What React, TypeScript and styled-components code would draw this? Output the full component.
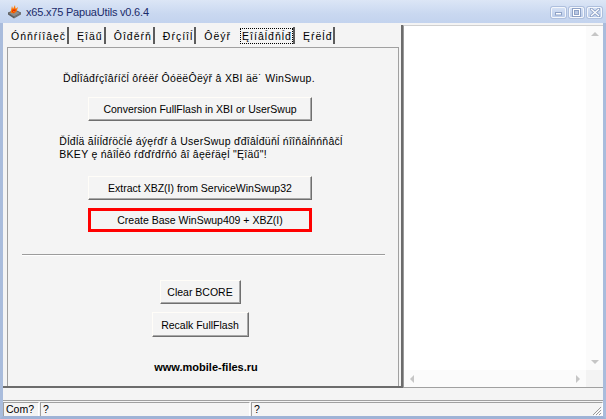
import React from 'react';
import styled, { createGlobalStyle } from 'styled-components';

const Global = createGlobalStyle`
  html, body { margin: 0; padding: 0; background: #f4f4f4; overflow: hidden; }
  body { font-family: "Liberation Sans", Arial, sans-serif; }
`;

const Window = styled.div`
  width: 606px;
  height: 419px;
  display: flex;
  flex-direction: column;
  background: #f4f4f4;
`;

const TitleBar = styled.div`
  height: 23px;
  flex: none;
  display: flex;
  align-items: center;
  padding: 0 4px 0 6px;
  box-sizing: border-box;
  background: linear-gradient(#dce6f6, #c9d8f0 60%, #c3d3ee);
`;

const TitleText = styled.span`
  margin-left: 4px;
  font-size: 11px;
  letter-spacing: -0.2px;
  color: #1b2b6a;
  flex: 1;
`;

const CapButtons = styled.div`
  display: flex;
  gap: 3px;
  margin-top: 1px;
`;

const CapButton = styled.div`
  width: 15px;
  height: 11px;
  box-sizing: border-box;
  border: 1px solid #f4f7fc;
  border-radius: 2px;
  background: linear-gradient(#d4e0f4, #bccdea);
  box-shadow: 0 0 0 1px #aebfdd;
  display: flex;
  align-items: center;
  justify-content: center;
`;

const Frame = styled.div`
  flex: 1;
  display: flex;
  flex-direction: column;
  border-left: 3px solid #a9bcdc;
  border-right: 3px solid #a9bcdc;
  border-bottom: 3px solid #9fb3d6;
`;

const Body = styled.div`
  height: 365px;
  flex: none;
  display: flex;
  padding-top: 2px;
  box-sizing: border-box;
`;

const LeftArea = styled.div`
  width: 400px;
  flex: none;
  display: flex;
  flex-direction: column;
  box-sizing: border-box;
  padding-left: 4px;
  border-right: 2px solid #6c6c6c;
  border-bottom: 2px solid #6c6c6c;
`;

const TabStrip = styled.div`
  height: 21px;
  display: flex;
  align-items: flex-start;
  flex: none;
`;

const Tab = styled.div<{ $selected?: boolean; $sep?: boolean }>`
  height: 17px;
  margin-top: 2px;
  margin-right: 4px;
  padding: 0 1px 0 3px;
  display: flex;
  align-items: center;
  font-size: 10.5px;
  letter-spacing: 1px;
  color: #000;
  border-right: 2px solid ${p => (p.$sep ? '#5c5c5c' : 'transparent')};
  white-space: nowrap;
  & > span {
    padding: 1px 0 1px 1px;
    outline: ${p => (p.$selected ? '1px dotted #000' : 'none')};
  }
`;

const TabPanel = styled.div`
  flex: 1;
  margin-top: 1px;
  margin-right: 2px;
  border-left: 1px solid #a0a0a0;
  border-top: 1px solid #a0a0a0;
  border-right: 1px solid #a0a0a0;
  display: flex;
  flex-direction: column;
  align-items: center;
  padding-right: 6px;
`;

const Label = styled.div<{ $top: number; $shift?: number; $ls?: number }>`
  margin-top: ${p => p.$top}px;
  font-size: 10.5px;
  line-height: 13px;
  letter-spacing: ${p => p.$ls ?? 0}px;
  color: #000;
  white-space: nowrap;
  transform: translateX(${p => p.$shift ?? 0}px);
  text-align: left;
`;

const Site = styled(Label)`
  font-weight: bold;
  font-size: 11px;
`;

const Button = styled.div<{ $top: number; $w: number; $h?: number; $red?: boolean }>`
  margin-top: ${p => p.$top}px;
  width: ${p => p.$w}px;
  height: ${p => p.$h ?? 24}px;
  box-sizing: border-box;
  display: flex;
  align-items: center;
  justify-content: center;
  font-size: 10.5px;
  color: #000;
  background: #f4f4f4;
  white-space: nowrap;
  ${p =>
    p.$red
      ? `border: 3px solid #ff0000;`
      : `border-top: 1px solid #fffdf8;
         border-left: 1px solid #fffdf8;
         border-right: 1px solid #6f6f6f;
         border-bottom: 1px solid #6f6f6f;
         box-shadow: inset -1px -1px 0 #a8a8a8;`}
`;

const Separator = styled.div<{ $top: number }>`
  margin-top: ${p => p.$top}px;
  width: 363px;
  height: 0;
  border-top: 1px solid #9c9c9c;
  border-bottom: 1px solid #ffffff;
  transform: translateX(3px);
`;

const Memo = styled.div`
  flex: 1;
  display: flex;
  flex-direction: column;
  background: #fff;
  border-left: 1px solid #9a9a9a;
  border-top: 1px solid #d0d0d0;
  border-bottom: 1px solid #a0a0a0;
`;

const MemoMain = styled.div`
  flex: 1;
  display: flex;
`;

const MemoText = styled.div`
  flex: 1;
`;

const VScroll = styled.div`
  width: 17px;
  display: flex;
  flex-direction: column;
  justify-content: space-between;
  align-items: center;
  padding: 6px 0 6px;
  background: #fbfbfb;
`;

const HScroll = styled.div`
  height: 17px;
  display: flex;
`;

const HTrack = styled.div`
  flex: 1;
  display: flex;
  justify-content: space-between;
  align-items: center;
  padding: 0 6px;
  background: #fbfbfb;
`;

const Corner = styled.div`
  width: 17px;
  background: #f3f3f3;
`;

const Arrow = styled.div<{ $dir: 'up' | 'down' | 'left' | 'right' }>`
  width: 0;
  height: 0;
  ${p =>
    p.$dir === 'up'
      ? 'border-left: 4px solid transparent; border-right: 4px solid transparent; border-bottom: 4px solid #c6c6c6;'
      : p.$dir === 'down'
      ? 'border-left: 4px solid transparent; border-right: 4px solid transparent; border-top: 4px solid #c6c6c6;'
      : p.$dir === 'left'
      ? 'border-top: 4px solid transparent; border-bottom: 4px solid transparent; border-right: 4px solid #c6c6c6;'
      : 'border-top: 4px solid transparent; border-bottom: 4px solid transparent; border-left: 4px solid #c6c6c6;'}
`;

const StatusGap = styled.div`
  height: 12px;
  flex: none;
  border-bottom: 1px solid #a0a0a0;
`;

const StatusBar = styled.div`
  flex: 1;
  display: flex;
  gap: 1px;
  padding-top: 1px;
`;

const StatusPanel = styled.div<{ $w?: number }>`
  ${p => (p.$w ? `width: ${p.$w}px; flex: none;` : 'flex: 1;')}
  box-sizing: border-box;
  border-left: 1px solid #a0a0a0;
  border-top: 1px solid #a0a0a0;
  border-right: 1px solid #ffffff;
  padding-left: 2px;
  font-size: 10.5px;
  line-height: 13px;
  color: #000;
  display: flex;
  justify-content: space-between;
  align-items: flex-end;
`;

const AppIcon = () => (
  <svg width="16" height="15" viewBox="0 0 16 15">
    <path d="M2 9 L9 6 L15 9 L8 13 Z" fill="#8c8c8c" stroke="#505050" strokeWidth="0.8" />
    <path d="M2 9 L2 10.5 L8 14.5 L8 13 Z" fill="#5a5a5a" />
    <path d="M8 13 L8 14.5 L15 10.5 L15 9 Z" fill="#707070" />
    <path d="M4.5 8.5 L6 2 L7 5 L9 1 L9.5 5 L12 3 L10.5 7.5 L8 9.5 Z" fill="#ff7a00" />
    <path d="M6 8 L7 4.5 L8 6.5 L9.3 4 L9.5 7 L8 8.8 Z" fill="#e52000" />
    <path d="M7 8 L8 6.8 L8.8 7.6 Z" fill="#ffe040" />
  </svg>
);

const MinGlyph = () => (
  <svg width="9" height="7" viewBox="0 0 9 7">
    <rect x="1.5" y="3.5" width="6" height="2.5" fill="#fff" stroke="#8fa2c6" strokeWidth="1" />
  </svg>
);
const MaxGlyph = () => (
  <svg width="9" height="9" viewBox="0 0 9 9">
    <rect x="0.5" y="0.5" width="8" height="8" fill="#fff" stroke="#8fa2c6" strokeWidth="1" />
    <rect x="2.5" y="2.5" width="4" height="4" fill="#b9c8e4" stroke="#8fa2c6" strokeWidth="1" />
  </svg>
);
const CloseGlyph = () => (
  <svg width="10" height="9" viewBox="0 0 10 9">
    <path d="M1 1 L9 8 M9 1 L1 8" stroke="#8fa2c6" strokeWidth="3" strokeLinecap="square" />
    <path d="M1 1 L9 8 M9 1 L1 8" stroke="#ffffff" strokeWidth="1.2" />
  </svg>
);

const Grip = () => (
  <svg width="11" height="11" viewBox="0 0 11 11">
    <path d="M10 2 L2 10 M10 5 L5 10 M10 8 L8 10" stroke="#9a9a9a" strokeWidth="1" />
    <path d="M11 3 L3 11 M11 6 L6 11 M11 9 L9 11" stroke="#ffffff" strokeWidth="1" />
  </svg>
);

const tabs = [
  { t: 'Óńňŕíîâęč', sep: true },
  { t: 'Ęîäű', sep: true },
  { t: 'Ôîđěŕň', sep: true },
  { t: 'Đŕçíîĺ', sep: true },
  { t: 'Ôëýř', sep: false },
  { t: 'Ęîíâĺđňĺđ', sep: true, sel: true },
  { t: 'Ęŕëĺđ', sep: true },
];

export default function App() {
  return (
    <>
      <Global />
      <Window>
        <TitleBar>
          <AppIcon />
          <TitleText>x65.x75 PapuaUtils v0.6.4</TitleText>
          <CapButtons>
            <CapButton><MinGlyph /></CapButton>
            <CapButton><MaxGlyph /></CapButton>
            <CapButton><CloseGlyph /></CapButton>
          </CapButtons>
        </TitleBar>
        <Frame>
          <Body>
            <LeftArea>
              <TabStrip>
                {tabs.map(tb => (
                  <Tab key={tb.t} $sep={tb.sep} $selected={tb.sel}>
                    <span>{tb.t}</span>
                  </Tab>
                ))}
              </TabStrip>
              <TabPanel>
                <Label $top={24} $shift={-11} $ls={0.3}>
                  Ďđĺîáđŕçîâŕíčĺ ôŕéëŕ ÔóëëÔëýř â XBI äë˙ WinSwup.
                </Label>
                <Button $top={12} $w={224}>Conversion FullFlash in XBI or UserSwup</Button>
                <Label $top={14} $shift={1} $ls={0.27}>
                  Ďĺđĺä ăĺíĺđŕöčĺé áýęŕďŕ â UserSwup ďđîâĺđüňĺ ńîîňâĺňńňâčĺ
                  <br />
                  BKEY ę ńâîĺěó ŕďďŕđŕňó âî âęëŕäęĺ "Ęîäű"!
                </Label>
                <Button $top={15} $w={224}>Extract XBZ(I) from ServiceWinSwup32</Button>
                <Button $top={8} $w={224} $red>Create Base WinSwup409 + XBZ(I)</Button>
                <Separator $top={22} />
                <Button $top={24} $w={81}>Clear BCORE</Button>
                <Button $top={8} $w={97} $h={25}>Recalk FullFlash</Button>
                <Site $top={24} $shift={6}>www.mobile-files.ru</Site>
              </TabPanel>
            </LeftArea>
            <Memo>
              <MemoMain>
                <MemoText />
                <VScroll>
                  <Arrow $dir="up" />
                  <Arrow $dir="down" />
                </VScroll>
              </MemoMain>
              <HScroll>
                <HTrack>
                  <Arrow $dir="left" />
                  <Arrow $dir="right" />
                </HTrack>
                <Corner />
              </HScroll>
            </Memo>
          </Body>
          <StatusGap />
          <StatusBar>
            <StatusPanel $w={36}>Com?</StatusPanel>
            <StatusPanel $w={210}>?</StatusPanel>
            <StatusPanel>
              ?
              <Grip />
            </StatusPanel>
          </StatusBar>
        </Frame>
      </Window>
    </>
  );
}
